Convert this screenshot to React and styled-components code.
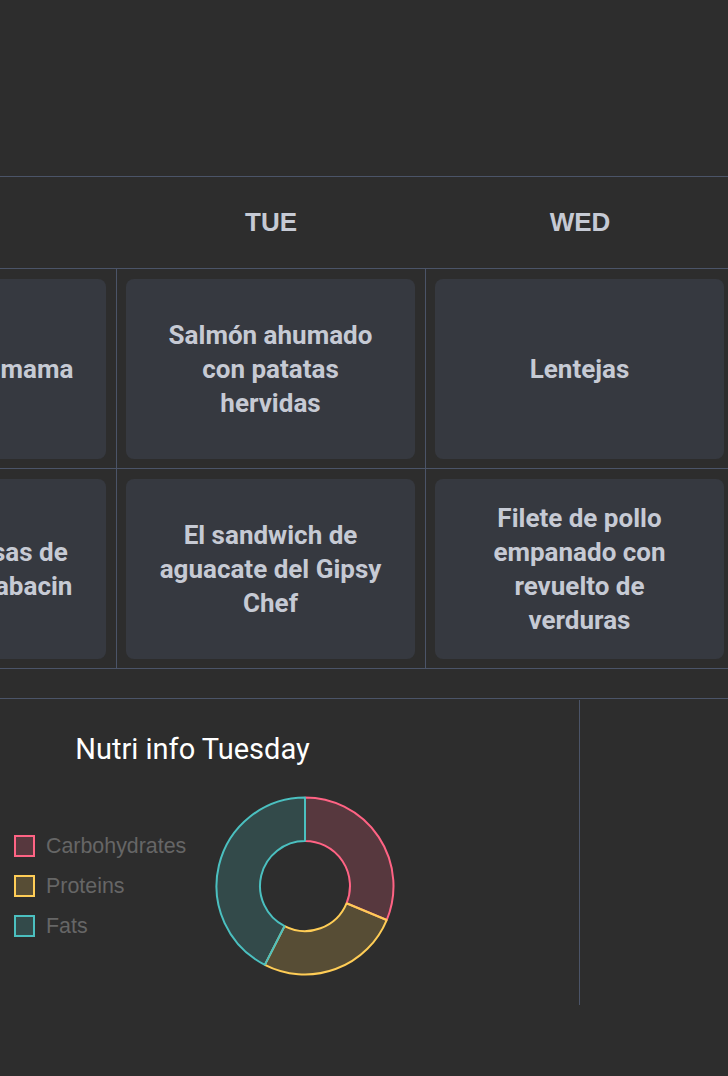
import React from "react";
import styled, { createGlobalStyle } from "styled-components";

const GlobalStyle = createGlobalStyle`
  html, body {
    margin: 0;
    padding: 0;
    background: #2d2d2d;
    overflow: hidden;
  }
  body {
    font-family: Roboto, "Noto Sans", sans-serif;
  }
  * { box-sizing: border-box; }
`;

const LINE = "#4b5468";

const Page = styled.div`
  width: 100%;
  min-height: 1076px;
  background: #2d2d2d;
  overflow: hidden;
`;

const TopBar = styled.header`
  height: 176px;
`;

const Scroller = styled.main`
  margin-left: -193px;
  width: 1300px;
`;

const Table = styled.section`
  display: flex;
  flex-direction: column;
`;

const HeaderRow = styled.div`
  display: flex;
  height: 93px;
  border-top: 1px solid ${LINE};
  border-bottom: 1px solid ${LINE};
`;

const DayHead = styled.div`
  width: 309px;
  flex: none;
  display: flex;
  align-items: center;
  justify-content: center;
  font-family: "Liberation Sans", Arial, sans-serif;
  font-weight: 700;
  font-size: 26px;
  color: #c6cad4;
  padding-left: 1px;
`;

const BodyRow = styled.div`
  display: flex;
  border-bottom: 1px solid ${LINE};
`;

const Cell = styled.div`
  width: 309px;
  flex: none;
  border-left: 1px solid ${LINE};
  padding: 10px 10px 9px 9px;
`;

const MealCard = styled.div`
  height: 180px;
  border-radius: 8px;
  background: #363940;
  display: flex;
  align-items: center;
  justify-content: center;
  text-align: center;
  padding: 0 28px;
  font-family: Roboto, sans-serif;
  font-weight: 700;
  font-size: 26px;
  line-height: 34px;
  color: #c6cad4;
`;

const Spacer = styled.div`
  height: 29px;
`;

const Bottom = styled.section`
  display: flex;
  border-top: 1px solid ${LINE};
`;

const ChartPanel = styled.div`
  width: 773px;
  flex: none;
  height: 305px;
  margin-top: 1px;
  border-right: 1px solid ${LINE};
  padding-top: 32px;
  display: flex;
  flex-direction: column;
`;

const ChartTitle = styled.h2`
  margin: 0;
  text-align: center;
  font-family: Roboto, sans-serif;
  font-weight: 400;
  font-size: 29px;
  line-height: 34px;
  color: #ffffff;
  padding-right: 1px;
`;

const ChartRow = styled.div`
  display: flex;
  align-items: center;
  gap: 29px;
  padding-left: 207px;
  margin-top: 30px;
`;

const Legend = styled.ul`
  list-style: none;
  margin: 0;
  padding: 0;
  width: 172px;
  display: flex;
  flex-direction: column;
`;

const LegendItem = styled.li`
  height: 40px;
  display: flex;
  align-items: center;
  gap: 11px;
  font-family: "Liberation Sans", Arial, sans-serif;
  font-size: 21.4px;
  color: #666666;
  white-space: nowrap;
`;

const Swatch = styled.span`
  width: 21px;
  height: 22px;
  flex: none;
  border: 2px solid ${(p) => p.$stroke};
  background: ${(p) => p.$fill};
`;

const series = [
  { label: "Carbohydrates", stroke: "rgb(255, 99, 132)", fill: "rgba(255, 99, 132, 0.2)", from: 0, to: 112.6 },
  { label: "Proteins", stroke: "rgb(255, 205, 86)", fill: "rgba(255, 205, 86, 0.2)", from: 112.6, to: 207 },
  { label: "Fats", stroke: "rgb(75, 192, 192)", fill: "rgba(75, 192, 192, 0.2)", from: 207, to: 360 },
];

const pt = (cx, cy, r, deg) => {
  const a = (deg * Math.PI) / 180;
  return [cx + r * Math.sin(a), cy - r * Math.cos(a)];
};

const arcPath = (cx, cy, R, r, a0, a1) => {
  const end = a1 - a0 >= 360 ? a1 - 0.01 : a1;
  const large = end - a0 > 180 ? 1 : 0;
  const [x0, y0] = pt(cx, cy, R, a0);
  const [x1, y1] = pt(cx, cy, R, end);
  const [x2, y2] = pt(cx, cy, r, end);
  const [x3, y3] = pt(cx, cy, r, a0);
  return `M${x0} ${y0} A${R} ${R} 0 ${large} 1 ${x1} ${y1} L${x2} ${y2} A${r} ${r} 0 ${large} 0 ${x3} ${y3} Z`;
};

function Doughnut() {
  return (
    <svg width="180" height="180" viewBox="0 0 180 180">
      {series.map((s) => (
        <path
          key={s.label}
          d={arcPath(90, 90, 88.5, 45, s.from, s.to)}
          fill={s.fill}
          stroke={s.stroke}
          strokeWidth="2"
          strokeLinejoin="bevel"
        />
      ))}
    </svg>
  );
}

const days = ["MON", "TUE", "WED", "THU"];
const meals = [
  ["Tortilla de la mama", "Salmón ahumado con patatas hervidas", "Lentejas", "Pasta con tomate"],
  ["Hamburguesas de ternera y calabacin", "El sandwich de aguacate del Gipsy Chef", "Filete de pollo empanado con revuelto de verduras", "Ensalada"],
];

export default function App() {
  return (
    <>
      <GlobalStyle />
      <Page>
        <TopBar />
        <Scroller>
          <Table>
            <HeaderRow>
              {days.map((d) => (
                <DayHead key={d}>{d}</DayHead>
              ))}
            </HeaderRow>
            {meals.map((row, i) => (
              <BodyRow key={i}>
                {row.map((m, j) => (
                  <Cell key={j}>
                    <MealCard>{m}</MealCard>
                  </Cell>
                ))}
              </BodyRow>
            ))}
          </Table>
          <Spacer />
          <Bottom>
            <ChartPanel>
              <ChartTitle>Nutri info Tuesday</ChartTitle>
              <ChartRow>
                <Legend>
                  {series.map((s) => (
                    <LegendItem key={s.label}>
                      <Swatch $stroke={s.stroke} $fill={s.fill} />
                      {s.label}
                    </LegendItem>
                  ))}
                </Legend>
                <Doughnut />
              </ChartRow>
            </ChartPanel>
          </Bottom>
        </Scroller>
      </Page>
    </>
  );
}
